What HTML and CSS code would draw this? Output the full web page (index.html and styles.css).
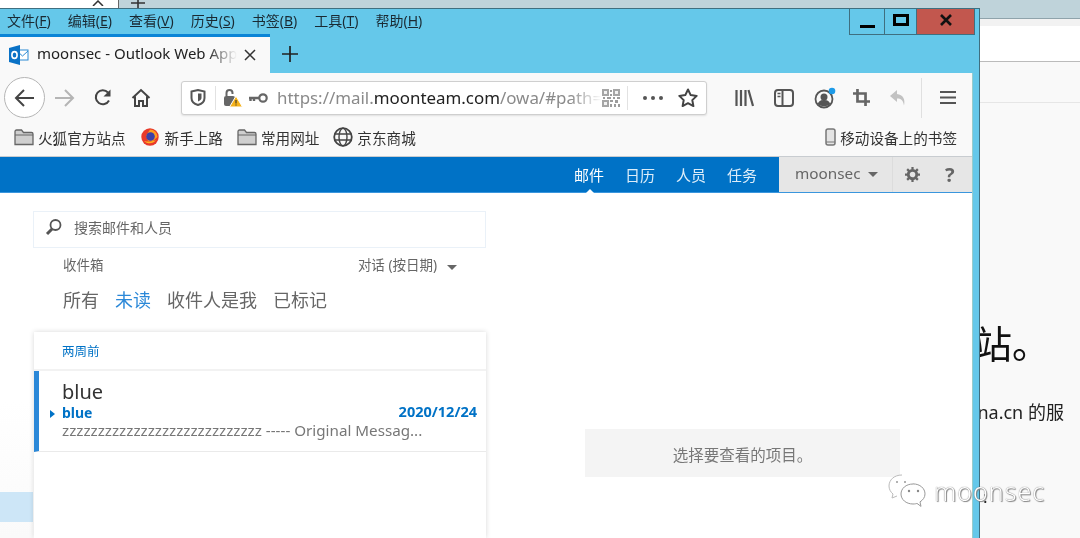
FILE: index.html
```html
<!DOCTYPE html>
<html lang="zh-CN">
<head>
    <meta charset="UTF-8">
    <title>moonsec - Outlook Web App</title>
    <link rel="stylesheet" href="styles.css">
</head>
<body>
<div class="desktop">
    <!-- window behind -->
    <div class="back-window">
        <div class="back-tabs">
            <div class="back-tab">
                <svg width="12" height="6" viewBox="0 0 12 6"><path d="M1 6l5-5 5 5" fill="none" stroke="#333" stroke-width="1.500"/></svg>
            </div>
            <svg class="back-plus" width="14" height="8" viewBox="0 0 14 8"><path d="M7 0v8M0 3h14" stroke="#333" stroke-width="1.600"/></svg>
        </div>
        <div class="back-gap"></div>
        <div class="back-bar"></div>
        <div class="back-page">
            <p class="back-title">的网站。</p>
            <p class="back-line">china.cn 的服</p>
            <p class="back-colon">:</p>
        </div>
    </div>

    <!-- firefox window -->
    <div class="browser">
        <div class="menu-row">
            <div class="menu">
                <span>文件(<u>F</u>)</span>
                <span>编辑(<u>E</u>)</span>
                <span>查看(<u>V</u>)</span>
                <span>历史(<u>S</u>)</span>
                <span>书签(<u>B</u>)</span>
                <span>工具(<u>T</u>)</span>
                <span>帮助(<u>H</u>)</span>
            </div>
            <div class="win-btns">
                <div class="win-btn win-min"><i></i></div>
                <div class="win-btn win-max"><i></i></div>
                <div class="win-btn win-close">
                    <svg width="14" height="12" viewBox="0 0 14 12"><path d="M2 1l10 10M12 1L2 11" stroke="#111" stroke-width="2.6" fill="none"/></svg>
                </div>
            </div>
        </div>

        <div class="tab-row">
            <div class="tab">
                <svg class="tab-icon" width="20" height="20" viewBox="0 0 20 20">
                    <rect x="8" y="5" width="11" height="10" fill="#fff" stroke="#2a8ad4"/>
                    <path d="M8 6l5.500 5L19 6" fill="none" stroke="#2a8ad4"/>
                    <path d="M0 3l11-3v20L0 17z" fill="#0a72c6"/>
                    <ellipse cx="5.500" cy="10" rx="2.600" ry="3.400" fill="none" stroke="#fff" stroke-width="1.600"/>
                </svg>
                <span class="tab-title">moonsec - Outlook Web App</span>
                <svg class="tab-close" width="12" height="12" viewBox="0 0 12 12"><path d="M1 1l10 10M11 1L1 11" stroke="#333" stroke-width="1.500"/></svg>
            </div>
            <svg class="tab-new" width="16" height="16" viewBox="0 0 16 16"><path d="M8 0v16M0 8h16" stroke="#222" stroke-width="1.700"/></svg>
        </div>

        <div class="page-frame">
            <div class="toolbar">
                <div class="back-btn">
                    <svg width="22" height="20" viewBox="0 0 22 20"><path d="M20 10H3M10 2l-8 8 8 8" fill="none" stroke="#444" stroke-width="2"/></svg>
                </div>
                <svg class="tool fwd" width="22" height="20" viewBox="0 0 22 20"><path d="M2 10h17M12 2l8 8-8 8" fill="none" stroke="#b5b5b5" stroke-width="2"/></svg>
                <svg class="tool reload" width="20" height="20" viewBox="0 0 20 20"><path d="M16 12.500A7 7 0 1 1 15 4.500" fill="none" stroke="#444" stroke-width="2"/><path d="M17.500 1.500v7h-7z" fill="#444"/></svg>
                <svg class="tool home" width="20" height="20" viewBox="0 0 20 20"><path d="M1.500 10L10 2l8.500 8M4 8.500V18h4v-5h4v5h4V8.500" fill="none" stroke="#444" stroke-width="2"/></svg>

                <div class="urlbar">
                    <svg class="u-shield" width="16" height="17" viewBox="0 0 16 17"><path d="M1.500 2.500L8 1l6.500 1.500V9c0 3.500-3 6-6.500 7C4.500 15 1.500 12.500 1.500 9z" fill="none" stroke="#555" stroke-width="2"/><path d="M8 4.500h3.500V9c0 1.500-1.500 2.800-3.500 3.500z" fill="#555"/></svg>
                    <span class="u-sep"></span>
                    <svg class="u-lock" width="20" height="20" viewBox="0 0 20 20"><rect x="1" y="8" width="11" height="10" rx="2" fill="#666"/><path d="M3.500 8V5a3 3 0 0 1 6 0v1" fill="none" stroke="#666" stroke-width="2"/><path d="M13 8l6.500 11h-13z" fill="#f5b21a" stroke="#fff"/><path d="M13 12v3.500M13 16.500v1" stroke="#222" stroke-width="1"/></svg>
                    <svg class="u-key" width="20" height="12" viewBox="0 0 20 12"><circle cx="15" cy="6" r="3.700" fill="none" stroke="#666" stroke-width="2.200"/><path d="M11 6H1M2.500 6v3M6 6v3" stroke="#666" stroke-width="2.400" fill="none"/></svg>
                    <div class="u-text"><span class="u-dim">https://mail.</span>moonteam.com<span class="u-dim">/owa/#path=</span></div>
                    <svg class="u-qr" width="18" height="18" viewBox="0 0 18 18">
                        <path d="M0 0h7v7H0zM11 0h7v7h-7zM0 11h7v7H0z" fill="#a5a5a5"/>
                        <path d="M2 2h3v3H2zM13 2h3v3h-3zM2 13h3v3H2z" fill="#f2f2f2"/>
                        <path d="M8 1h2v2H8zM8 5h2v2H8zM1 8h2v2H1zM5 8h4v2H5zM11 8h2v2h-2zM15 8h3v2h-3zM8 11h3v2H8zM13 11h3v3h-3zM8 15h2v3H8zM12 15h2v3h-2zM16 15h2v3h-2z" fill="#9c9c9c"/>
                    </svg>
                    <span class="u-sep u-sep2"></span>
                    <svg class="u-dots" width="20" height="4" viewBox="0 0 20 4"><circle cx="2" cy="2" r="2" fill="#555"/><circle cx="10" cy="2" r="2" fill="#555"/><circle cx="18" cy="2" r="2" fill="#555"/></svg>
                    <svg class="u-star" width="20" height="19" viewBox="0 0 20 19"><path d="M10 1.500l2.700 5.600 6 .8-4.400 4.200 1.100 6L10 15.200l-5.400 2.900 1.100-6L1.300 7.900l6-.8z" fill="none" stroke="#444" stroke-width="2" stroke-linejoin="round"/></svg>
                </div>

                <div class="tools-right">
                    <svg width="19" height="18" viewBox="0 0 19 18"><path d="M1.500 1v16M6 1v16M10.500 1v16M13.500 1l4.500 16" fill="none" stroke="#555" stroke-width="2.200"/></svg>
                    <svg width="20" height="18" viewBox="0 0 20 18"><rect x="1" y="1" width="18" height="16" rx="3" fill="none" stroke="#555" stroke-width="2"/><path d="M8.500 1v16" stroke="#555" stroke-width="2"/><path d="M3.500 4.500h3M3.500 7.500h3" stroke="#555" stroke-width="1.500"/></svg>
                    <svg class="t-account" width="22" height="22" viewBox="0 0 22 22"><circle cx="10" cy="12" r="8.500" fill="none" stroke="#555" stroke-width="1.800"/><circle cx="10" cy="10" r="3.500" fill="#555"/><path d="M3.800 17c1-3.500 3.500-4 6.200-4s5.200.5 6.200 4c-3 3-9.400 3-12.400 0z" fill="#555"/><circle cx="18" cy="4" r="3.300" fill="#1e9be8"/></svg>
                    <svg class="t-crop" width="17" height="17" viewBox="0 0 19 19"><path d="M0 5h14v14M5 0v14h14" fill="none" stroke="#666" stroke-width="3"/></svg>
                    <svg class="undo" width="18" height="18" viewBox="0 0 18 18"><path d="M8 1L1 7l7 6V9.500c4 0 6 1.500 7 7 1.500-6-1-11-7-11.500z" fill="#c2c2c2"/></svg>
                    <span class="tool-sep"></span>
                    <svg class="t-menu" width="16" height="15" viewBox="0 0 16 15"><path d="M0 2h16M0 7.500h16M0 13h16" stroke="#555" stroke-width="2.200"/></svg>
                </div>
            </div>

            <div class="bookmarks">
                <div class="bm">
                    <svg width="20" height="17" viewBox="0 0 20 17"><path d="M1 15.500V2.500C1 1.700 1.700 1 2.500 1h5l2 2.500h8c.8 0 1.500.7 1.500 1.500v10.500z" fill="#cfcfcf" stroke="#666" stroke-width="1.300"/><path d="M1 6h18" stroke="#666"/></svg>
                    <span>火狐官方站点</span>
                </div>
                <div class="bm bm-fox">
                    <svg width="18" height="18" viewBox="0 0 18 18"><circle cx="9" cy="9" r="8.700" fill="#e8392b"/><path d="M9 1.500a7.500 7.500 0 0 1 7.500 7.500L12 13H7L5 8z" fill="#ff9a1f"/><circle cx="9.500" cy="8.500" r="4.300" fill="#3b3fa8"/><path d="M3 13c3 3 9 3.500 12-1-3 1.500-8 2-12 1z" fill="#ffb01f"/></svg>
                    <span>新手上路</span>
                </div>
                <div class="bm bm-folder">
                    <svg width="20" height="17" viewBox="0 0 20 17"><path d="M1 15.500V2.500C1 1.700 1.700 1 2.500 1h5l2 2.500h8c.8 0 1.500.7 1.500 1.500v10.500z" fill="#cfcfcf" stroke="#666" stroke-width="1.300"/><path d="M1 6h18" stroke="#666"/></svg>
                    <span>常用网址</span>
                </div>
                <div class="bm">
                    <svg width="20" height="20" viewBox="0 0 20 20"><circle cx="10" cy="10" r="8.800" fill="none" stroke="#444" stroke-width="1.800"/><ellipse cx="10" cy="10" rx="4" ry="8.800" fill="none" stroke="#444" stroke-width="1.400"/><path d="M1.500 7h17M1.500 13h17" stroke="#444" stroke-width="1.400"/></svg>
                    <span>京东商城</span>
                </div>
                <div class="bm bm-mobile">
                    <svg width="11" height="18" viewBox="0 0 11 18"><rect x="1" y="1" width="9" height="16" rx="2" fill="#e4e4e4" stroke="#777" stroke-width="1.500"/><path d="M1 14h9" stroke="#777"/></svg>
                    <span>移动设备上的书签</span>
                </div>
            </div>

            <div class="owa-head">
                <nav class="owa-nav">
                    <span class="owa-nav-on">邮件</span>
                    <span>日历</span>
                    <span>人员</span>
                    <span>任务</span>
                </nav>
                <div class="owa-user">
                    <span class="owa-name">moonsec</span>
                    <span class="caret"></span>
                </div>
                <div class="owa-icons">
                    <svg width="15" height="15" viewBox="0 0 16 16"><circle cx="8" cy="8" r="4.500" fill="none" stroke="#666" stroke-width="3"/><path d="M8 0v3M8 13v3M0 8h3M13 8h3M2.300 2.300l2.100 2.100M11.600 11.600l2.100 2.100M13.700 2.300l-2.100 2.100M4.400 11.600l-2.100 2.100" stroke="#666" stroke-width="2.400"/></svg>
                    <span class="help">?</span>
                </div>
            </div>

            <div class="owa-body">
                <div class="folders">
                    <div class="folder-on"></div>
                </div>
                <div class="list-col">
                    <div class="search">
                        <svg width="18" height="18" viewBox="0 0 18 18"><circle cx="10.500" cy="7" r="5" fill="none" stroke="#555" stroke-width="1.800"/><path d="M7 11l-5 5" stroke="#555" stroke-width="3"/></svg>
                        <span>搜索邮件和人员</span>
                    </div>
                    <div class="list-meta">
                        <span>收件箱</span>
                        <span class="sort">对话 (按日期)<i class="caret sort-caret"></i></span>
                    </div>
                    <div class="filters">
                        <span>所有</span>
                        <span class="filter-on">未读</span>
                        <span>收件人是我</span>
                        <span>已标记</span>
                    </div>
                    <div class="list">
                        <div class="group">两周前</div>
                        <div class="item">
                            <div class="item-from">blue</div>
                            <div class="item-sub">
                                <i class="item-arrow"></i>
                                <span class="item-subject">blue</span>
                                <span class="item-date">2020/12/24</span>
                            </div>
                            <div class="item-preview">zzzzzzzzzzzzzzzzzzzzzzzzzzzz ----- Original Messag...</div>
                        </div>
                    </div>
                </div>
                <div class="reading">
                    <div class="reading-msg">选择要查看的项目。</div>
                </div>
            </div>
        </div>
    </div>

    <!-- watermark -->
    <div class="mark">
        <svg width="40" height="34" viewBox="0 0 40 34">
            <path d="M14 1C6 1 1 6 1 12c0 3 1.500 6 4 8l-1 4 5-2" fill="rgba(255,255,255,.85)" stroke="#bbb"/>
            <path d="M25 10c-7 0-12 4.500-12 10s5 10 12 10c2 0 3-.3 4-.6l4 3-1-4.500c3-2 5-4.500 5-8 0-5.500-5-10-12-10z" fill="rgba(255,255,255,.85)" stroke="#999"/>
            <circle cx="9" cy="8" r="1" fill="#999"/><circle cx="17" cy="8" r="1" fill="#999"/>
            <circle cx="21" cy="17" r="1.200" fill="#888"/><circle cx="30" cy="17" r="1.200" fill="#888"/>
        </svg>
        <span>moonsec</span>
    </div>
</div>
</body>
</html>
```

FILE: styles.css
```css
* {
    box-sizing: border-box;
}
html, body {
    margin: 0;
    padding: 0;
}
body {
    width: 1080px;
    height: 538px;
    overflow: hidden;
    font-family: "Noto Sans", "Noto Sans CJK SC", sans-serif;
    color: #333;
}
svg {
    display: block;
    flex: none;
}
.desktop {
    position: relative;
    width: 1080px;
    height: 538px;
    overflow: hidden;
    background: #f9f9f9;
    filter: blur(.3px);
}

/* window behind */
.back-window {
    position: absolute;
    inset: 0;
    display: flex;
    flex-direction: column;
}
.back-tabs {
    height: 19px;
    display: flex;
    background: #bfd3da;
    border-bottom: 1px solid #8fa3ab;
}
.back-tab {
    width: 119px;
    padding: 0 15px 0 92px;
    background: #fff;
    border-right: 1px solid #666;
}
.back-plus {
    margin-left: 12px;
}
.back-gap {
    height: 43px;
    background: #fff;
    border-top: 7px solid #f2f2f2;
    border-bottom: 1px solid #bbb;
}
.back-bar {
    height: 41px;
    background: #f9f9f9;
    border-bottom: 1px solid #e6e6e6;
}
.back-page {
    flex: 1;
    padding-left: 940px;
    white-space: nowrap;
}
.back-title {
    margin: 216px 0 0 -42px;
    font-size: 38px;
    line-height: 48px;
    color: #111;
}
.back-line {
    margin: 33px 0 0 13px;
    font-size: 18px;
    line-height: 24px;
    color: #222;
}
.back-colon {
    margin: 61px 0 0 43px;
    font-size: 17px;
    line-height: 24px;
    color: #222;
}

/* firefox window */
.browser {
    position: absolute;
    left: 0;
    top: 8px;
    width: 980px;
    height: 530px;
    display: flex;
    flex-direction: column;
    background: #65c8ea;
    border-top: 1px solid #3f6f80;
    border-right: 1px solid #3f6f80;
}
.menu-row {
    height: 25px;
    display: flex;
    justify-content: space-between;
}
.menu {
    display: flex;
    gap: 17px;
    padding-left: 7px;
    font-size: 14px;
    line-height: 24px;
    color: #1a2a33;
}
.win-btns {
    display: flex;
    margin-right: 4px;
    height: 26px;
    border: 1px solid #3f6f80;
    border-top: none;
}
.win-btn {
    display: flex;
    align-items: center;
    justify-content: center;
}
.win-min {
    width: 35px;
    border-right: 1px solid #3f6f80;
}
.win-min i {
    width: 15px;
    height: 3px;
    background: #000;
    margin-top: 9px;
}
.win-max {
    width: 32px;
    border-right: 1px solid #3f6f80;
}
.win-max i {
    width: 16px;
    height: 12px;
    border: 3px solid #000;
    margin-bottom: 3px;
}
.win-close {
    width: 57px;
    background: #c2574e;
    padding-bottom: 3px;
}
.tab-row {
    height: 39px;
    display: flex;
    align-items: center;
}
.tab {
    width: 270px;
    height: 39px;
    display: flex;
    align-items: center;
    padding-left: 9px;
    background: #f9f9f9;
    border-top: 3px solid #0a84d6;
}
.tab-title {
    width: 200px;
    margin: -5px 0 0 8px;
    overflow: hidden;
    white-space: nowrap;
    font-size: 15px;
    color: #222;
    -webkit-mask-image: linear-gradient(to right, #000 85%, transparent 100%);
    mask-image: linear-gradient(to right, #000 85%, transparent 100%);
}
.tab-close {
    margin-left: 7px;
}
.tab-new {
    margin-left: 12px;
}
.page-frame {
    flex: 1;
    width: 973px;
    display: flex;
    flex-direction: column;
    background: #fff;
    border-right: 1px solid #9cc;
    min-height: 0;
}
.toolbar {
    height: 47px;
    display: flex;
    align-items: center;
    background: #f9f9f9;
    padding: 2px 0 0 4px;
}
.back-btn {
    width: 41px;
    height: 41px;
    display: flex;
    align-items: center;
    justify-content: center;
    background: #fff;
    border: 1px solid #b5b5b5;
    border-radius: 50%;
}
.fwd {
    margin-left: 8px;
}
.reload {
    margin-left: 18px;
}
.home {
    margin-left: 18px;
}
.urlbar {
    width: 526px;
    height: 34px;
    margin-left: 30px;
    display: flex;
    align-items: center;
    background: #fff;
    border: 1px solid #cfcfcf;
    border-radius: 3px;
    box-shadow: 0 1px 2px rgba(0, 0, 0, .1);
}
.u-shield {
    margin-left: 8px;
}
.u-sep {
    width: 1px;
    height: 24px;
    margin-left: 9px;
    background: #e2e2e2;
}
.u-lock {
    margin-left: 7px;
}
.u-key {
    margin-left: 5px;
}
.u-text {
    width: 325px;
    margin-left: 9px;
    overflow: hidden;
    white-space: nowrap;
    font-size: 16.9px;
    color: #222;
    -webkit-mask-image: linear-gradient(to right, #000 90%, transparent 100%);
    mask-image: linear-gradient(to right, #000 90%, transparent 100%);
}
.u-dim {
    color: #8a8a8a;
}
.u-qr {
    margin-left: 0;
}
.u-sep2 {
    margin-left: 7px;
}
.u-dots {
    margin-left: 15px;
}
.u-star {
    margin-left: 15px;
}
.tools-right {
    display: flex;
    align-items: center;
    margin-left: 28px;
    gap: 20px;
}
.t-crop {
    margin-left: -3px;
}
.undo {
    margin-left: -1px;
}
.tool-sep {
    width: 1px;
    height: 40px;
    margin: 0 -2px 0 -6px;
    background: #e0e0e0;
}
.bookmarks {
    height: 37px;
    display: flex;
    align-items: center;
    background: #f9f9f9;
    padding-left: 14px;
    padding-bottom: 2px;
    font-size: 14.6px;
    color: #333;
    border-bottom: 1px solid #c8ccd0;
}
.bm {
    display: flex;
    align-items: center;
    gap: 4px;
    margin-right: 15px;
}
.bm-fox {
    gap: 6px;
    margin-right: 14px;
}
.bm-folder {
    margin-right: 14px;
}
.bm-mobile {
    margin: 0 15px 0 auto;
}
.owa-head {
    height: 36px;
    display: flex;
    align-items: stretch;
    background: #0072c6;
    border-bottom: 1px solid #3a96dd;
}
.owa-nav {
    display: flex;
    gap: 21px;
    align-items: center;
    margin-left: 574px;
    width: 205px;
    font-size: 15px;
    color: #dcedf9;
}
.owa-nav-on {
    position: relative;
    color: #fff;
}
.owa-nav-on::after {
    content: "";
    position: absolute;
    left: 12px;
    bottom: -8px;
    border: 4px solid transparent;
    border-top: none;
    border-bottom: 4px solid #fff;
}
.owa-user {
    width: 114px;
    display: flex;
    align-items: center;
    gap: 7px;
    padding: 0 0 4px 16px;
    background: #e6e6e6;
    border-right: 1px solid #dcdcdc;
}
.owa-name {
    font-size: 15.3px;
    color: #666;
}
.owa-user .caret {
    margin-top: 4px;
}
.caret {
    width: 0;
    height: 0;
    border: 5px solid transparent;
    border-bottom: none;
    border-top: 5px solid #666;
}
.owa-icons {
    flex: 1;
    display: flex;
    align-items: center;
    gap: 25px;
    padding-left: 12px;
    background: #e6e6e6;
}
.help {
    font-size: 20px;
    font-weight: 700;
    color: #666;
}
.owa-body {
    flex: 1;
    display: flex;
    min-height: 0;
    background: #fff;
}
.folders {
    width: 33px;
    padding-top: 299px;
    background: linear-gradient(to bottom, #fff 60%, #fafafa);
}
.folder-on {
    height: 30px;
    background: #cde6f7;
}
.list-col {
    width: 453px;
    display: flex;
    flex-direction: column;
    padding-top: 18px;
}
.search {
    height: 37px;
    display: flex;
    align-items: center;
    gap: 11px;
    padding: 0 0 5px 11px;
    border: 1px solid #eaf1f8;
    font-size: 14px;
    color: #666;
}
.list-meta {
    display: flex;
    justify-content: space-between;
    padding: 7px 29px 0 30px;
    height: 30px;
    font-size: 13.5px;
    line-height: 20px;
    color: #666;
}
.sort {
    display: flex;
    align-items: center;
    height: 20px;
}
.sort-caret {
    margin: 5px 0 0 10px;
}
.filters {
    display: flex;
    gap: 16px;
    height: 55px;
    padding: 6px 0 0 30px;
    font-size: 18px;
    line-height: 32px;
    color: #666;
}
.filter-on {
    color: #2b88d8;
}
.list {
    flex: 1;
    margin-top: -1px;
    margin-left: 1px;
    box-shadow: 0 0 5px rgba(0, 0, 0, .16);
}
.group {
    height: 39px;
    padding: 10px 0 0 28px;
    font-size: 12.5px;
    line-height: 20px;
    color: #0072c6;
    border-bottom: 2px solid #f2f2f2;
}
.item {
    height: 81px;
    padding: 9px 9px 0 23px;
    border-left: 5px solid #2b88d8;
    border-bottom: 1px solid #eaeaea;
}
.item-from {
    font-size: 20px;
    line-height: 23px;
    color: #333;
}
.item-sub {
    position: relative;
    display: flex;
    justify-content: space-between;
    height: 18px;
    font-size: 14px;
    line-height: 19px;
    font-weight: 700;
    color: #0072c6;
}
.item-arrow {
    position: absolute;
    left: -12px;
    top: 7px;
    border: 4px solid transparent;
    border-right: none;
    border-left: 5px solid #0072c6;
}
.item-date {
    font-size: 14.5px;
    margin-top: -1px;
}
.item-preview {
    font-size: 15.2px;
    line-height: 19px;
    color: #777;
    white-space: nowrap;
}
.reading {
    flex: 1;
    padding: 236px 0 0 99px;
}
.reading-msg {
    width: 315px;
    height: 48px;
    background: #f4f4f4;
    text-align: center;
    font-size: 15.5px;
    line-height: 52px;
    color: #777;
}

/* watermark */
.mark {
    position: absolute;
    left: 888px;
    top: 474px;
    display: flex;
    align-items: center;
    gap: 6px;
    font-size: 25px;
    font-weight: 300;
    letter-spacing: 1px;
    color: #fff;
    text-shadow: 0 0 1px #555, 1px 1px 1px #888;
}
```
